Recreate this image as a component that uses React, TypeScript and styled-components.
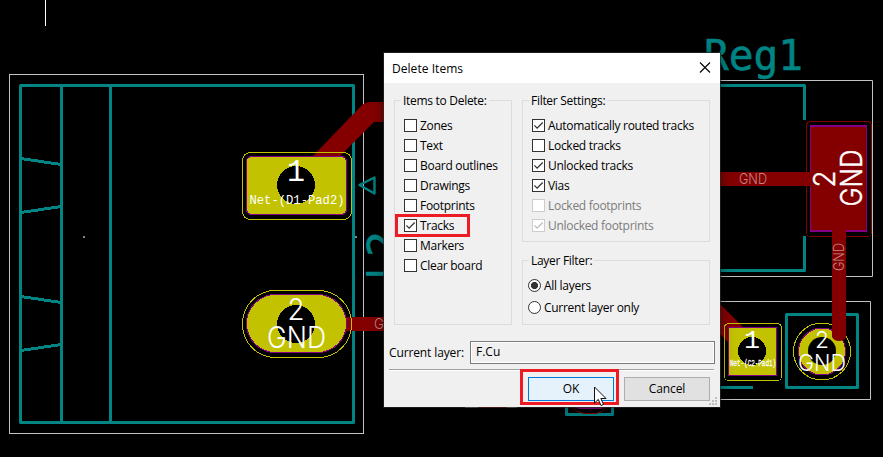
import React from "react";
import styled, { createGlobalStyle, css } from "styled-components";

const GlobalStyle = createGlobalStyle`
  *, *::before, *::after { box-sizing: border-box; }
  html, body { margin: 0; padding: 0; background: #000; overflow: hidden; }
`;

const TEAL = "#008484";
const COPPER = "#840000";
const PAD = "#c2c200";
const MASK = "#840084";
const OUTLINE = "#c2c2c2";

const Workspace = styled.main`
  position: relative;
  width: 883px;
  height: 457px;
  overflow: hidden;
  background: #000;
`;

const Board = styled.svg`
  display: block;
  width: 883px;
  height: 457px;
`;

const Dialog = styled.section`
  position: absolute;
  left: 383px;
  top: 52px;
  width: 338px;
  height: 356px;
  border: 1px solid rgba(40, 40, 40, 0.7);
  display: flex;
  flex-direction: column;
  background: #f0f0f0;
  background-clip: padding-box;
  color: #000;
  font-family: "Open Sans", "Noto Sans", sans-serif;
  font-size: 12px;
  letter-spacing: -0.29px;
  line-height: 16px;
  white-space: nowrap;
  box-shadow: 0 2px 12px rgba(0, 0, 0, 0.4);
`;

const TitleBar = styled.header`
  height: 30px;
  flex: none;
  display: flex;
  align-items: center;
  justify-content: space-between;
  padding: 0 9px 0 8px;
  background: #fff;
`;

const Title = styled.span`
  padding-top: 1px;
  letter-spacing: 0.05px;
`;

const CloseButton = styled.button`
  display: flex;
  border: 0;
  padding: 0;
  margin-bottom: 1px;
  background: none;
`;

const Groups = styled.div`
  display: grid;
  grid-template-columns: 118px 188px;
  column-gap: 10px;
  padding: 10px 0 0 10px;
`;

const Column = styled.div`
  display: flex;
  flex-direction: column;
  gap: 11px;
`;

const Group = styled.div<{ $height: number }>`
  height: ${(p) => p.$height}px;
  margin-top: 7px;
  border: 1px solid #dcdcdc;
  padding: 0 0 0 9px;
`;

const Legend = styled.div`
  width: max-content;
  height: 16px;
  margin: -8px 0 0 -3px;
  padding: 0 2px;
  background: #f0f0f0;
`;

const Options = styled.div<{ $top: number; $shift?: number }>`
  display: flex;
  flex-direction: column;
  padding-top: ${(p) => p.$top}px;
  margin-left: ${(p) => p.$shift ?? 0}px;
`;

const Option = styled.label<{ $pitch: number; $disabled?: boolean }>`
  display: flex;
  align-items: center;
  gap: 3px;
  height: ${(p) => p.$pitch}px;
  color: ${(p) => (p.$disabled ? "#7c7c7c" : "#000")};
`;

const CheckFrame = styled.span<{ $disabled?: boolean }>`
  width: 13px;
  height: 13px;
  flex: none;
  display: flex;
  margin-bottom: 1px;
  border: 1px solid ${(p) => (p.$disabled ? "#cccccc" : "#333333")};
  background: #fff;
  color: ${(p) => (p.$disabled ? "#bcbcbc" : "#333333")};
`;

const RadioFrame = styled.span<{ $on?: boolean }>`
  width: 13px;
  height: 13px;
  flex: none;
  margin-bottom: 1px;
  border: 1px solid #333;
  border-radius: 50%;
  background: #fff;
  ${(p) =>
    p.$on &&
    css`
      background: radial-gradient(circle, #333 3.2px, #fff 3.9px);
    `}
`;

const LayerRow = styled.div`
  display: flex;
  align-items: center;
  height: 23px;
  margin: 16px 5px 0 5px;
`;

const LayerLabel = styled.span`
  width: 81px;
  letter-spacing: -0.12px;
`;

const LayerField = styled.div`
  width: 245px;
  height: 23px;
  border: 1px solid #7a7a7a;
  box-shadow: inset 0 0 0 1px #fff;
  padding: 2px 5px;
  letter-spacing: 0;
`;

const Separator = styled.div`
  height: 2px;
  margin: 5px 6px 0 5px;
  background: #fff;
  border-top: 1px solid #a0a0a0;
`;

const Actions = styled.footer`
  display: flex;
  justify-content: flex-end;
  gap: 10px;
  padding: 6px 10px 0 0;
`;

const ActionButton = styled.button<{ $primary?: boolean }>`
  width: 86px;
  height: 24px;
  padding: 0 0 1px;
  font: inherit;
  letter-spacing: -0.1px;
  color: #000;
  border: 1px solid ${(p) => (p.$primary ? "#0078d7" : "#adadad")};
  background: ${(p) => (p.$primary ? "#e5f1fb" : "#e1e1e1")};
`;

const Highlight = styled.div<{ $x: number; $y: number; $w: number; $h: number }>`
  position: absolute;
  left: ${(p) => p.$x}px;
  top: ${(p) => p.$y}px;
  width: ${(p) => p.$w}px;
  height: ${(p) => p.$h}px;
  border: 3px solid #ed1c24;
`;

const Overlay = styled.svg<{ $x: number; $y: number }>`
  position: absolute;
  left: ${(p) => p.$x}px;
  top: ${(p) => p.$y}px;
`;

const ITEMS = ["Zones", "Text", "Board outlines", "Drawings", "Footprints", "Tracks", "Markers", "Clear board"];

const FILTERS = [
  { label: "Automatically routed tracks", on: true },
  { label: "Locked tracks", on: false },
  { label: "Unlocked tracks", on: true },
  { label: "Vias", on: true },
  { label: "Locked footprints", on: false, disabled: true },
  { label: "Unlocked footprints", on: true, disabled: true },
];

function CheckOption({ label, on, disabled }: { label: string; on: boolean; disabled?: boolean }) {
  return (
    <Option $pitch={20} $disabled={disabled}>
      <CheckFrame $disabled={disabled}>
        {on && (
          <svg width="11" height="11" viewBox="0 0 11 11">
            <path d="M1.4 5.4 4.1 8.1 9.7 2.5" fill="none" stroke="currentColor" strokeWidth="1.3" />
          </svg>
        )}
      </CheckFrame>
      {label}
    </Option>
  );
}

const FACES = {
  thin: { family: 'Inter, "Noto Sans", sans-serif', weight: 300, cap: 0.727 },
  sans: { family: '"DejaVu Sans", sans-serif', weight: 400, cap: 0.729 },
  mono: { family: '"DejaVu Sans Mono", monospace', weight: 400, cap: 0.729 },
  fixed: { family: '"Liberation Mono", monospace', weight: 400, cap: 0.66 },
};

type LabelProps = {
  x: number;
  y: number;
  width: number;
  cap: number;
  text: string;
  fill?: string;
  rotated?: boolean;
  stroke?: number;
  face?: keyof typeof FACES;
};

/* Board label: x/y is the left end of the baseline, cap is the capital height. */
function Label({ x, y, width, cap, text, fill = "#fff", rotated, stroke = 0, face = "thin" }: LabelProps) {
  const f = FACES[face];
  return (
    <text
      transform={`translate(${x} ${y})${rotated ? " rotate(-90)" : ""}`}
      fontFamily={f.family}
      fontWeight={f.weight}
      fontSize={cap / f.cap}
      textLength={width}
      lengthAdjust="spacingAndGlyphs"
      fill={fill}
      stroke={stroke ? fill : "none"}
      strokeWidth={stroke}
    >
      {text}
    </text>
  );
}

function BoardView() {
  return (
    <Board viewBox="0 0 883 457">
      <path d="M45.5 0V26" stroke="#fff" />

      <g fill="none" stroke={OUTLINE}>
        <rect x="9.5" y="74.5" width="354" height="359" />
        <path d="M720 80.5H872.5V276.5H720M720 301.5H870.5V399.5H720" />
      </g>

      <g fill="none" stroke={TEAL} strokeWidth="3" strokeLinejoin="round">
        <rect x="20.5" y="85.5" width="333" height="337" />
        <path d="M61.5 85V422M110.5 85V422" />
        <path
          d="M21 158.500 61 164.500M21 212.500 61 206.500M21 296.500 61 302.500M21 350.500 61 344.500"
          shapeRendering="crispEdges"
        />
        <path d="M359.500 185 374.500 177.500V193.500Z" strokeWidth="2.400" />
        <path d="M720 85.5H804.5V120M804.5 236V270.5H720" />
        <path d="M720 387.5H753" />
        <rect x="786.5" y="314.5" width="71" height="73" />
        <path d="M566.5 400V414.5H612.5V400" />
      </g>
      <path d="M465 407.500H478M507 407.500H517" stroke="#c2c2c2" />
      <path d="M478 407.500H507" stroke="#a00000" />
      <path d="M572 407Q577 413 584 413.500H596Q602 413 606 407" fill="none" stroke={COPPER} />
      <path d="M575 406.500 579 409H601L605 406.500Z" fill={MASK} />
      <path d="M83 236h2v2h-2zM355 236h2v2h-2z" fill="#848484" />

      <Label x={704} y={70} width={99} cap={30.5} text="Reg1" fill={TEAL} face="mono" stroke={0.6} />
      <Label x={397} y={257} width={26} cap={30} text="2" fill={TEAL} rotated face="mono" stroke={0.6} />
      <Label x={397} y={280} width={12.5} cap={31} text="J" fill={TEAL} rotated face="sans" />

      <g fill={COPPER}>
        <path d="M311 158 362 105Q366 102 370 102H384V122H374L338 158Z" />
        <rect x="345" y="317" width="40" height="14" />
        <path d="M720 304 743 327 728 342 720 334Z" />
        <rect x="720" y="172" width="95" height="14" />
      </g>

      <g shapeRendering="crispEdges">
        <rect x="246.500" y="156.500" width="100" height="58" rx="5" fill={PAD} stroke={MASK} />
        <rect x="242.500" y="152.500" width="109" height="67" rx="8" fill="none" stroke={PAD} />
        <rect x="246.500" y="294.500" width="100" height="58" rx="29" fill={PAD} stroke={MASK} />
        <rect x="242.500" y="290.500" width="109" height="67" rx="33" fill="none" stroke={PAD} />
        <circle cx="296" cy="185" r="19" />
        <circle cx="296" cy="324" r="19" />

        <rect x="810.500" y="125.500" width="56" height="106" fill={COPPER} stroke={MASK} />
        <path d="M810 126H867M810 231H867" stroke={MASK} strokeWidth="2" />
        <rect x="806.500" y="121.500" width="65" height="115" rx="4" fill="none" stroke={COPPER} />
        <path d="M804 172H815V186H804Z" fill={COPPER} />

        <rect x="728.500" y="327.500" width="48" height="48" fill={PAD} stroke={MASK} />
        <rect x="724.500" y="323.500" width="57" height="57" rx="4" fill="none" stroke={PAD} />
        <circle cx="752" cy="351" r="14" />
        <circle cx="822" cy="351.500" r="23.500" fill={PAD} stroke={MASK} />
        <circle cx="822" cy="351.500" r="28.500" fill="none" stroke={PAD} />
      </g>
      <path d="M832 230H846V337Q844 341 839 341Q834 341 832 337Z" fill={COPPER} />
      <circle cx="822" cy="351" r="14" />

      <Label x={287} y={180.500} width={18} cap={20.500} text="1" face="fixed" />
      <Label x={249.500} y={204} width={95} cap={9} text="Net-(D1-Pad2)" face="fixed" />
      <Label x={287.500} y={320} width={17} cap={21.500} text="2" />
      <Label x={267} y={348} width={59} cap={21.500} text="GND" />
      <Label x={374} y={328.500} width={10} cap={11} text="G" fill="#c28484" />
      <Label x={739} y={184} width={28} cap={11} text="GND" fill="#c28484" />
      <Label x={844} y={271} width={28} cap={11} text="GND" fill="#c28484" rotated />
      <Label x={835} y={187.500} width={17} cap={21.500} text="2" rotated stroke={0.400} />
      <Label x={862} y={206.500} width={57} cap={21.500} text="GND" rotated stroke={0.400} />
      <Label x={744} y={348} width={16} cap={17} text="1" face="fixed" />
      <Label x={730} y={366} width={46} cap={6} text="Net-(C2-Pad1)" face="fixed" stroke={0.300} />
      <Label x={815} y={348} width={14} cap={17} text="2" />
      <Label x={798} y={371} width={48} cap={17} text="GND" />
    </Board>
  );
}

export default function App() {
  return (
    <>
      <GlobalStyle />
      <Workspace>
        <BoardView />
        <Dialog>
          <TitleBar>
            <Title>Delete Items</Title>
            <CloseButton aria-label="Close">
              <svg width="12" height="12" viewBox="0 0 12 12">
                <path d="M1 .5 11 10.500M11 .5 1 10.500" stroke="#000" strokeWidth="1.100" />
              </svg>
            </CloseButton>
          </TitleBar>
          <Groups>
            <Group $height={225}>
              <Legend>Items to Delete:</Legend>
              <Options $top={7}>
                {ITEMS.map((label) => (
                  <CheckOption key={label} label={label} on={label === "Tracks"} />
                ))}
              </Options>
            </Group>
            <Column>
              <Group $height={142}>
                <Legend>Filter Settings:</Legend>
                <Options $top={7}>
                  {FILTERS.map((f) => (
                    <CheckOption key={f.label} {...f} />
                  ))}
                </Options>
              </Group>
              <Group $height={65}>
                <Legend>Layer Filter:</Legend>
                <Options $top={6} $shift={-4}>
                  <Option $pitch={22}>
                    <RadioFrame $on />
                    All layers
                  </Option>
                  <Option $pitch={22}>
                    <RadioFrame />
                    Current layer only
                  </Option>
                </Options>
              </Group>
            </Column>
          </Groups>
          <LayerRow>
            <LayerLabel>Current layer:</LayerLabel>
            <LayerField>F.Cu</LayerField>
          </LayerRow>
          <Separator />
          <Actions>
            <ActionButton $primary>OK</ActionButton>
            <ActionButton>Cancel</ActionButton>
          </Actions>
        </Dialog>
        <Overlay $x={709} $y={397} width="9" height="9">
          <path d="M6 0h2v2h-2zM3 3h2v2h-2zM6 3h2v2h-2zM0 6h2v2h-2zM3 6h2v2h-2zM6 6h2v2h-2z" fill="#bfbfbf" />
        </Overlay>
        <Highlight $x={395} $y={214} $w={75} $h={23} />
        <Highlight $x={520} $y={369} $w={99} $h={36} />
        <Overlay $x={594} $y={386} width="14" height="21">
          <path d="M.5 1V17L4.300 13.400 7 19.500 9.500 18.400 6.900 12.500H12Z" fill="#fff" stroke="#111" />
        </Overlay>
      </Workspace>
    </>
  );
}
